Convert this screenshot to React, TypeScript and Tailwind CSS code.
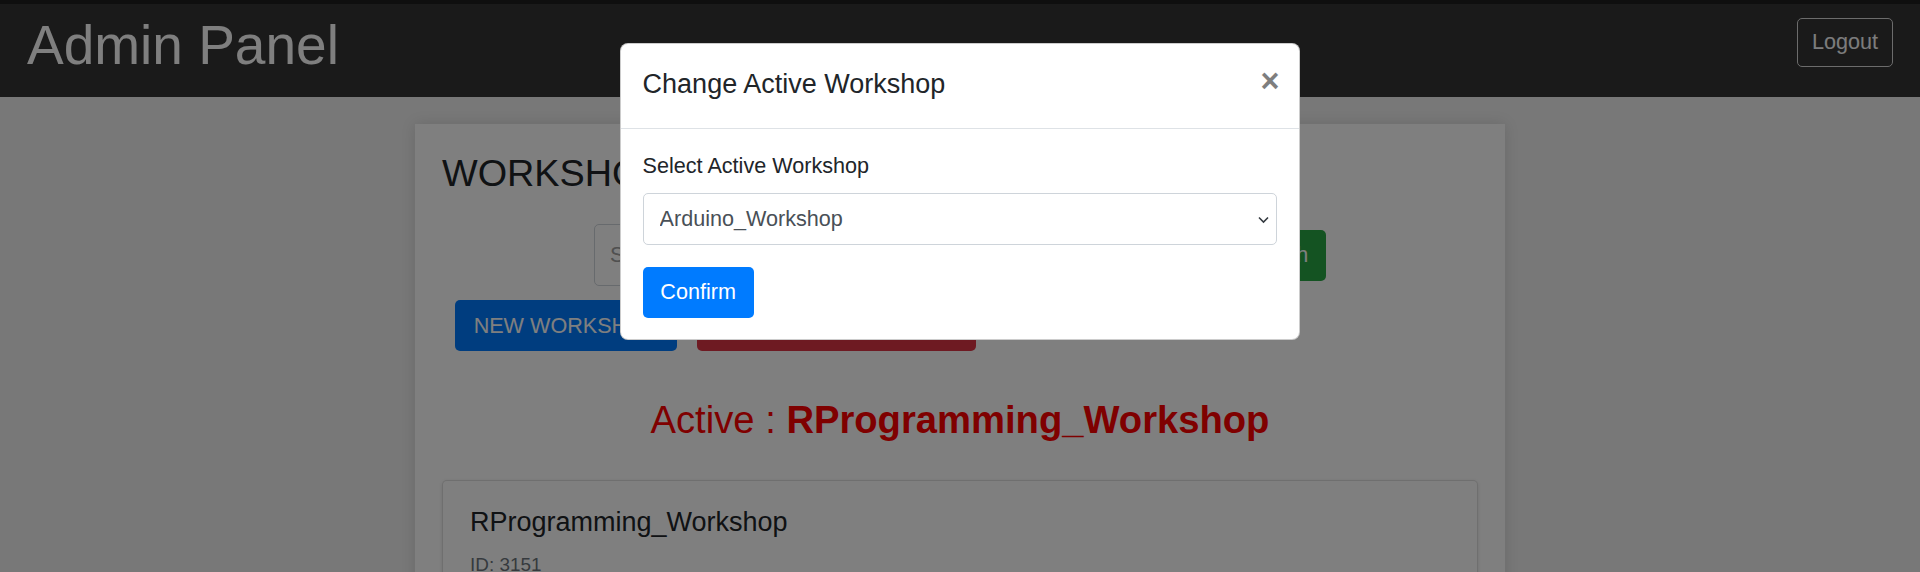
const WorkshopCard = ({ name, id }: { name: string; id: number }) => (
  <div className="mt-[37px] rounded-[5px] border border-black/[0.125] bg-white px-[27px] pt-[25px] pb-[27px] shadow-[0_1px_4px_rgba(0,0,0,0.12)]">
    <h5 className="text-[27px] leading-[1.2] text-[#212529]">{name}</h5>
    <p className="mt-[12px] text-[18.9px] leading-[1.5] text-[#6c757d]">ID: {id}</p>
  </div>
);

const ChangeActiveModal = () => (
  <div className="absolute inset-0 flex justify-center">
    <div className="mt-[43px] h-fit w-[680px] rounded-[8px] border border-black/20 bg-white">
      <div className="flex items-start justify-between border-b border-[#dee2e6] px-[21.6px] pt-[20px] pb-[23px]">
        <h5 className="text-[27px] leading-[1.5] text-[#212529]">Change Active Workshop</h5>
        <button className="-mr-[2px] mt-[1px] text-[32.4px] font-bold leading-none text-black opacity-50">
          ×
        </button>
      </div>
      <div className="p-[21.6px]">
        <label className="block text-[21.6px] leading-[1.5] text-[#212529]">Select Active Workshop</label>
        <div className="relative mt-[10.8px]">
          <select
            defaultValue="Arduino_Workshop"
            className="h-[52px] w-full appearance-none rounded-[5px] border border-[#ced4da] bg-white px-[16px] text-[21.6px] text-[#495057] outline-none"
          >
            <option>Arduino_Workshop</option>
            <option>RProgramming_Workshop</option>
          </select>
          <svg
            className="pointer-events-none absolute right-[8px] top-[23px]"
            width="11"
            height="8"
            viewBox="0 0 11 8"
            fill="none"
          >
            <polyline points="1,1.5 5.5,6 10,1.5" stroke="#343a40" strokeWidth="1.6" />
          </svg>
        </div>
        <button className="mt-[21.6px] h-[51px] w-[111px] rounded-[5px] bg-[#007bff] text-[21.6px] text-white">
          Confirm
        </button>
      </div>
    </div>
  </div>
);

export default function App() {
  return (
    <div className="relative h-[572px] overflow-hidden bg-[#f0f0f0] font-['Liberation_Sans',Arial,sans-serif]">
      <div className="h-[4px] bg-[#1e1e1e]" />
      <nav className="flex h-[93px] items-start justify-between bg-[#343434] px-[27px]">
        <a className="mt-[8px] text-[55px] leading-[1.2] text-white">Admin Panel</a>
        <button className="mt-[14px] h-[49px] w-[96px] rounded-[5px] border border-[#d8d8d8] text-[21.6px] text-[#f8f9fa]">
          Logout
        </button>
      </nav>

      <main className="mx-auto mt-[27px] w-[1090px] bg-white p-[27px] shadow-[0_0_14px_rgba(0,0,0,0.12)]">
        <h3 className="text-[37.8px] leading-[1.2] text-[#212529]">WORKSHOPS</h3>
        <form className="mt-[28px] flex items-center justify-center gap-[10px]">
          <input
            className="h-[62px] w-[618px] rounded-[5px] border border-[#ced4da] px-[15px] text-[21.6px] text-[#495057] placeholder:text-[#a0a0a0]"
            placeholder="Search Workshop"
          />
          <button type="button" className="h-[51px] w-[104px] rounded-[5px] bg-[#28a745] text-[21.6px] text-white">
            Search
          </button>
        </form>
        <div className="mt-[14px] flex gap-[20px] pl-[13px]">
          <button className="h-[51px] w-[222px] rounded-[5px] bg-[#007bff] text-[21.6px] uppercase text-white">
            New Workshop
          </button>
          <button className="h-[51px] w-[279px] rounded-[5px] bg-[#dc3545] text-[21.6px] uppercase text-white">
            Activate Workshop
          </button>
        </div>
        <h3 className="mt-[46px] text-center text-[38.2px] leading-[1.2] text-[#ff0000]">
          Active : <b>RProgramming_Workshop</b>
        </h3>
        <WorkshopCard name="RProgramming_Workshop" id={3151} />
      </main>

      <div className="absolute inset-0 bg-black/50" />
      <ChangeActiveModal />
    </div>
  );
}
